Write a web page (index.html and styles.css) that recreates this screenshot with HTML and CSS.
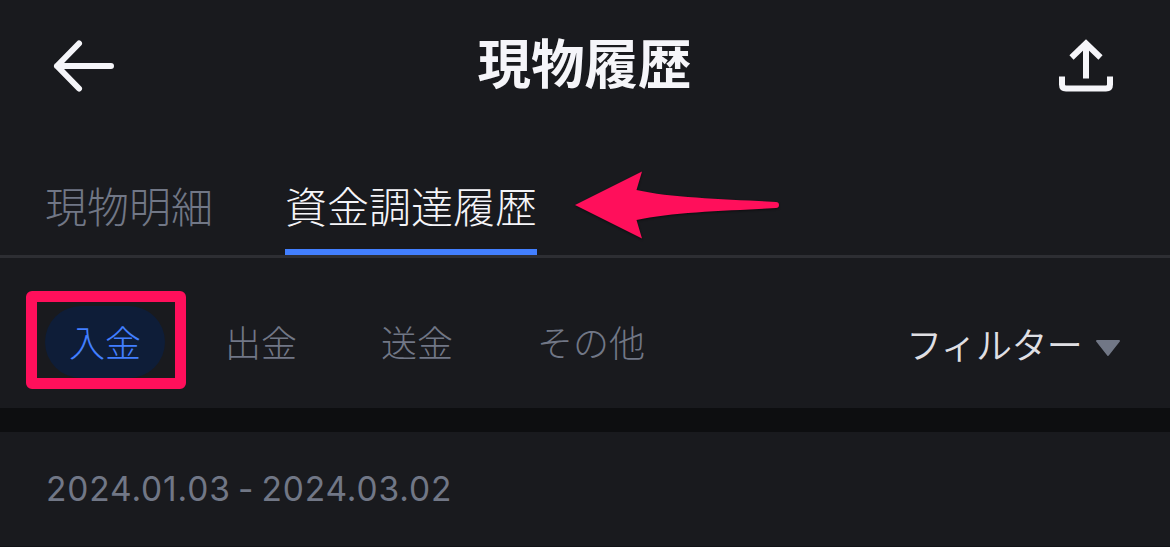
FILE: index.html
```html
<!DOCTYPE html>
<html lang="ja">
<head>
<meta charset="utf-8">
<title>現物履歴</title>
<link rel="stylesheet" href="styles.css">
</head>
<body>
<header class="header">
  <svg class="icon-back" viewBox="0 0 64 56" fill="none" stroke="#f5f5f9" stroke-width="6" stroke-linecap="round" stroke-linejoin="round"><path d="M27 5.500L5 28L27 50.500M5 28H59"/></svg>
  <h1 class="title">現物履歴</h1>
  <svg class="icon-share" viewBox="0 0 56 56" fill="none" stroke="#f5f5f9" stroke-width="6"><path d="M28 40.500V7M13.500 19.500L28 5.500L42.500 19.500M4 38.500V46.500Q4 50.500 8 50.500H48Q52 50.500 52 46.500V38.500"/></svg>
</header>
<nav class="tabs">
  <span class="tab">現物明細</span>
  <span class="tab tab-active">資金調達履歴</span>
  <svg class="pointer" viewBox="0 0 208 72"><path d="M1 35L68 1.500L62.500 20C98 28 150 29 202 32A3 3 0 0 1 202 38C150 41 98 42 62.500 50L68 68.500Z" fill="#ff0f5b"/></svg>
</nav>
<section class="filters">
  <div class="chips">
    <span class="chip chip-active">入金<i class="highlight"></i></span>
    <span class="chip">出金</span>
    <span class="chip">送金</span>
    <span class="chip">その他</span>
  </div>
  <div class="filter"><span class="filter-label">フィルター</span><svg class="caret" viewBox="0 0 26 17"><path d="M2 1H24L13 15Z" fill="#717786" stroke="#717786" stroke-width="2" stroke-linejoin="round"/></svg></div>
</section>
<div class="divider"></div>
<section class="range">2024.01.03 - 2024.03.02</section>
</body>
</html>
```
FILE: styles.css
```css
* { box-sizing: border-box; }
body {
  margin: 0;
  height: 547px;
  overflow: hidden;
  background: #191a1e;
  color: #f5f5f9;
  font-family: "Noto Sans CJK JP", sans-serif;
}
.header {
  height: 132px;
  padding: 0 56px 0 52px;
  display: flex;
  align-items: center;
  justify-content: space-between;
}
.icon-back { width: 64px; height: 56px; }
.icon-share { width: 56px; height: 56px; }
.title { margin: 0 5px 10px 0; font-size: 53.5px; line-height: 80px; font-weight: 700; }
.tabs {
  height: 126px;
  padding-left: 45px;
  border-bottom: 3px solid #2d2e33;
  display: flex;
  align-items: flex-end;
  gap: 72px;
}
.tab {
  height: 83px;
  font-size: 42px;
  line-height: 65px;
  font-weight: 300;
  color: #717786;
}
.tab-active { color: #f5f5f9; border-bottom: 6px solid #427fff; }
.pointer {
  width: 208px;
  height: 72px;
  margin: 0 0 13px -35px;
  filter: drop-shadow(0 1px 1px rgba(0, 0, 0, .5));
}
.filters {
  height: 150px;
  padding: 0 49px 0 45px;
  display: flex;
  justify-content: space-between;
}
.chips { display: flex; gap: 36px; padding-top: 48px; }
.chip {
  position: relative;
  height: 72px;
  padding: 0 24px;
  border-radius: 36px;
  font-size: 36px;
  line-height: 70px;
  font-weight: 300;
  color: #717786;
}
.chip-active { color: #427fff; background: #0e1d38; }
.highlight {
  position: absolute;
  left: -19px;
  top: -15px;
  width: 160px;
  height: 98px;
  border: 11px solid #ff0f5b;
  border-radius: 6px;
}
.filter {
  padding-top: 49px;
  display: flex;
  font-size: 36px;
  line-height: 72px;
  font-weight: 350;
  color: #dfdfe3;
}
.filter-label { letter-spacing: -0.7px; }
.caret { width: 26px; height: 17px; margin: 33px 0 0 13px; }
.divider { height: 24px; background: #0d0e10; }
.range {
  height: 115px;
  padding-left: 46px;
  border-bottom: 1px solid #111216;
  font-family: Inter, sans-serif;
  font-size: 33.5px;
  line-height: 115px;
  letter-spacing: 0.85px;
  word-spacing: -3px;
  color: #717786;
}
```
